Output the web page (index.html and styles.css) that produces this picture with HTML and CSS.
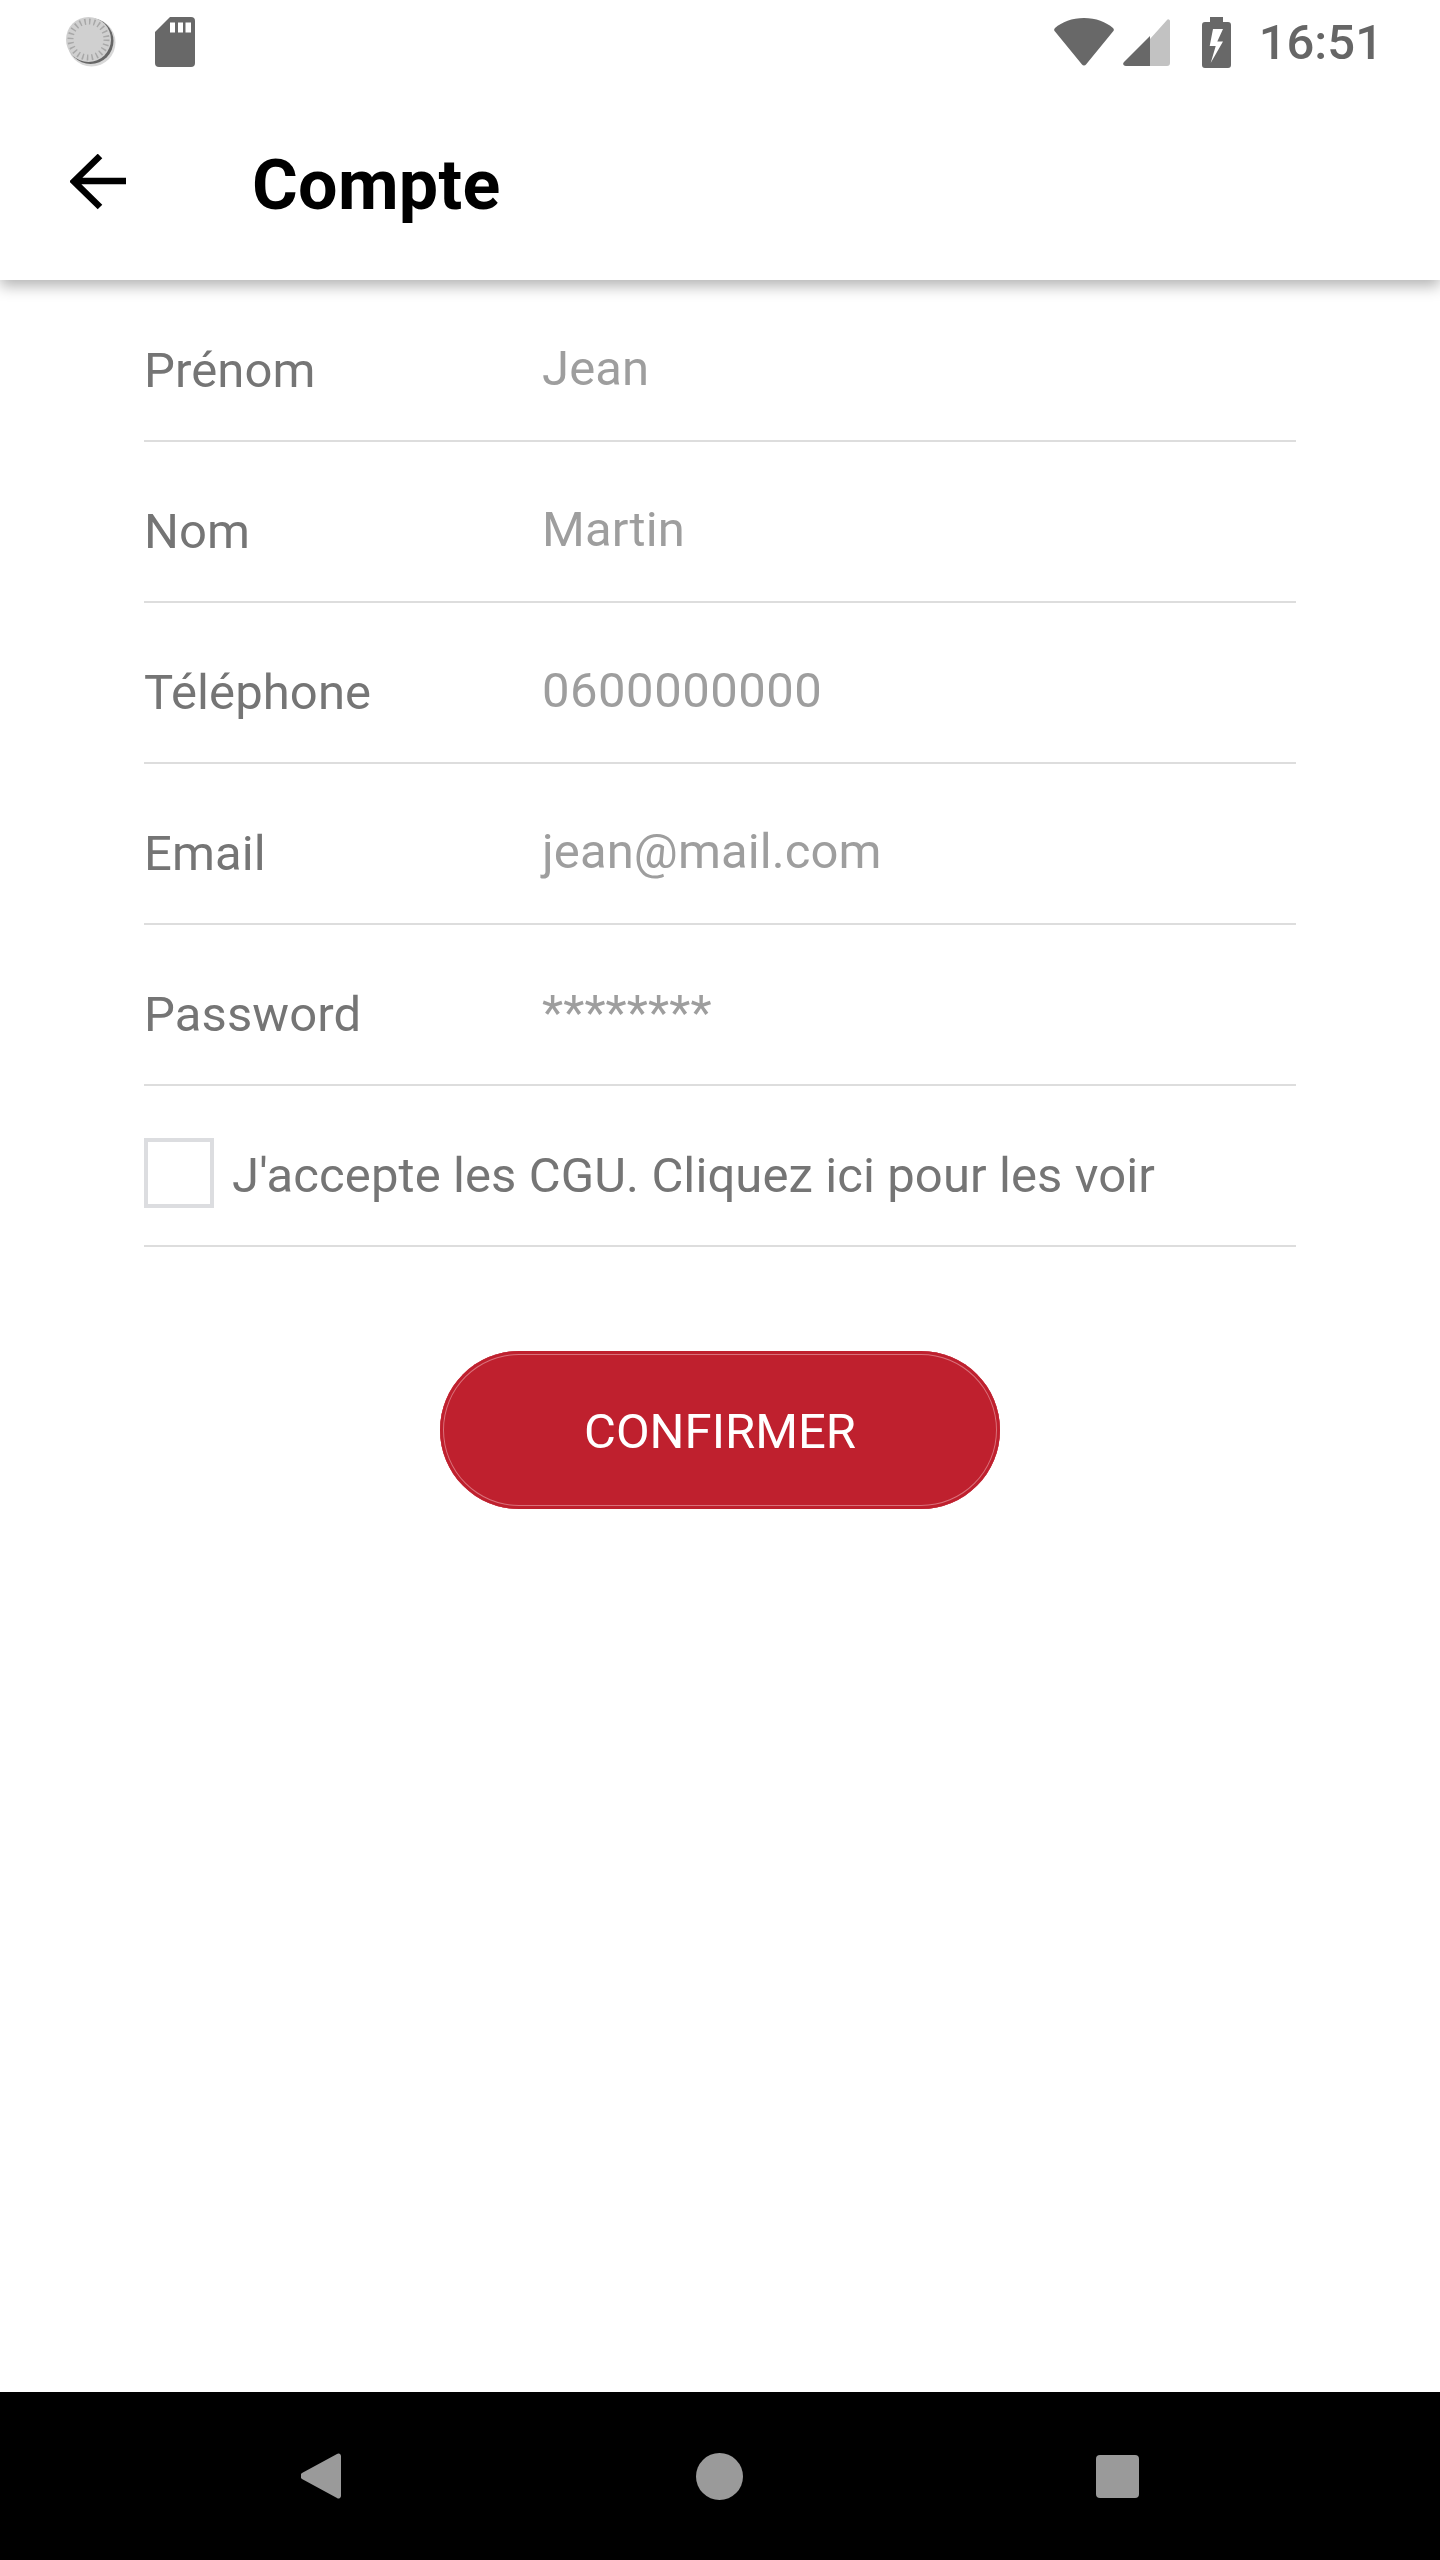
FILE: index.html
```html
<!DOCTYPE html>
<html lang="fr">
<head>
<meta charset="utf-8">
<title>Compte</title>
<meta name="viewport" content="width=device-width, initial-scale=1">
<link rel="stylesheet" href="styles.css">
</head>
<body>
<div class="screen">
  <div class="statusbar">
    <div class="status-left">
      <svg class="ic-spinner" width="50" height="50" viewBox="0 0 50 50">
        <circle cx="25.500" cy="25.500" r="24" fill="#d8d8d8"/>
        <circle cx="24.500" cy="24" r="23" fill="#666"/>
        <circle cx="22.500" cy="22.500" r="22.500" fill="#d0d0d0"/>
        <circle cx="22.500" cy="22.500" r="18" fill="none" stroke="#a8a8a8" stroke-width="6" stroke-dasharray="1.500 3.212"/>
      </svg>
      <svg class="ic-sd" width="40" height="50" viewBox="0 0 40 50">
        <path fill="#686868" d="M15 0H36a4 4 0 0 1 4 4V46a4 4 0 0 1-4 4H4a4 4 0 0 1-4-4V15Z"/>
        <path fill="#fff" d="M15 5.500h5v10h-5ZM23 5.500h5v10h-5ZM30.500 5.500h5.500v10h-5.500Z"/>
      </svg>
    </div>
    <div class="status-right">
      <svg class="ic-wifi" width="60" height="48" viewBox="0 0 60 48">
        <path fill="#686868" d="M1 10C8 4 18 0 30 0S52 4 59 10a2.500 2.500 0 0 1 0 3.500L32 46.500a2.600 2.600 0 0 1-4 0L1 13.500A2.500 2.500 0 0 1 1 10Z"/>
      </svg>
      <svg class="ic-signal" width="47" height="47" viewBox="0 0 47 47">
        <path fill="#c2c2c2" d="M27 20L44 1a1.700 1.700 0 0 1 3 1V44a3 3 0 0 1-3 3H27Z"/>
        <path fill="#686868" d="M27 17V47H3C0 47-.6 44.500 1 43Z"/>
      </svg>
      <svg class="ic-battery" width="29" height="51" viewBox="0 0 29 51">
        <path fill="#686868" fill-rule="evenodd" d="M8 0H21V5H26a3 3 0 0 1 3 3V48a3 3 0 0 1-3 3H3a3 3 0 0 1-3-3V8a3 3 0 0 1 3-3H8ZM11 12L7.700 29H13.700L8.700 46L21 24.500H15.300L21 12Z"/>
      </svg>
      <span class="clock">16:51</span>
    </div>
  </div>

  <div class="toolbar">
    <svg class="ic-back" width="56" height="56" viewBox="0 0 56 56">
      <path fill="none" stroke="#000" stroke-width="6.500" d="M56 27H5M30 2L4 27.500L30 53"/>
    </svg>
    <h1 class="title">Compte</h1>
  </div>

  <div class="form">
    <div class="row"><span class="label">Prénom</span><span class="value">Jean</span></div>
    <div class="row"><span class="label">Nom</span><span class="value">Martin</span></div>
    <div class="row"><span class="label">Téléphone</span><span class="value digits">0600000000</span></div>
    <div class="row"><span class="label">Email</span><span class="value">jean@mail.com</span></div>
    <div class="row"><span class="label">Password</span><span class="value">********</span></div>
    <div class="row">
      <span class="checkbox"></span>
      <span class="cgu">J'accepte les CGU. Cliquez ici pour les voir</span>
    </div>
  </div>

  <div class="actions">
    <button class="btn-confirm">CONFIRMER</button>
  </div>

  <div class="navbar">
    <svg width="40" height="46" viewBox="0 0 40 46">
      <path fill="#9a9a9a" d="M1 20L36 1a2.500 2.500 0 0 1 4 2V43a2.500 2.500 0 0 1-4 2L1 26a4 4 0 0 1 0-6Z"/>
    </svg>
    <svg class="nav-home" width="47" height="47" viewBox="0 0 47 47">
      <circle cx="23.500" cy="23.500" r="23.500" fill="#9a9a9a"/>
    </svg>
    <svg class="nav-recent" width="43" height="43" viewBox="0 0 43 43">
      <rect width="43" height="43" rx="4" fill="#9a9a9a"/>
    </svg>
  </div>
</div>
</body>
</html>
```

FILE: styles.css
```css
* {
  box-sizing: border-box;
}
body {
  margin: 0;
  background: #fff;
  font-family: Roboto, "Liberation Sans", sans-serif;
}
.screen {
  display: flex;
  flex-direction: column;
  height: 2560px;
}
svg {
  display: block;
  flex: none;
}

/* status bar */
.statusbar {
  height: 84px;
  display: flex;
  align-items: center;
  justify-content: space-between;
  padding: 0 57px 0 66px;
}
.status-left {
  display: flex;
  align-items: center;
  gap: 39px;
}
.status-right {
  display: flex;
  align-items: center;
}
.ic-signal {
  margin-left: 9px;
}
.ic-battery {
  margin-left: 32px;
}
.clock {
  margin-left: 28px;
  font-size: 49px;
  font-weight: 500;
  color: #666;
}

/* top toolbar, shadow falls only below it */
.toolbar {
  height: 196px;
  display: flex;
  align-items: center;
  padding-left: 70px;
  box-shadow: 0 6px 14px rgba(0, 0, 0, 0.3);
  clip-path: inset(0 0 -30px 0);
  position: relative;
}
.title {
  margin: 6px 0 0 126px;
  font-size: 70px;
  font-weight: 700;
  letter-spacing: 0.3px;
  color: #000;
}

/* form rows */
.form {
  padding: 1px 144px 0;
}
.row {
  height: 161px;
  display: flex;
  align-items: center;
  border-bottom: 2px solid #ddd;
  padding-top: 20px;
  font-size: 49px;
  letter-spacing: 0.1px;
}
.label {
  width: 398px;
  color: #757575;
}
.value {
  color: #9e9e9e;
  padding-bottom: 4px;
}
.digits {
  letter-spacing: 0.5px;
}
.checkbox {
  width: 70px;
  height: 70px;
  margin-top: -6px;
  border: 4px solid #dcdde0;
  margin-right: 18px;
}
.cgu {
  color: #757575;
}

/* confirm button */
.actions {
  display: flex;
  justify-content: center;
  padding-top: 104px;
}
.btn-confirm {
  width: 560px;
  height: 158px;
  padding-top: 4px;
  border: none;
  border-radius: 79px;
  background: #bf202e;
  color: #fff;
  font-family: inherit;
  font-size: 49px;
  box-shadow: inset 0 0 0 3px #bf202e, inset 0 0 0 4px #d9707a;
}

/* android nav bar */
.navbar {
  margin-top: auto;
  height: 168px;
  background: #000;
  display: flex;
  align-items: center;
  padding-left: 301px;
}
.nav-home {
  margin-left: 355px;
}
.nav-recent {
  margin-left: 353px;
}
```
